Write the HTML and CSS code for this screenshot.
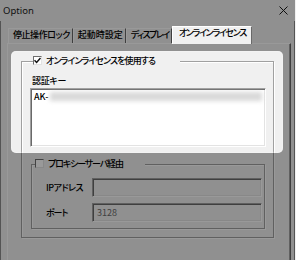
FILE: index.html
```html
<!DOCTYPE html>
<html lang="ja">
<head>
    <meta charset="UTF-8">
    <meta name="viewport" content="width=device-width, initial-scale=1.0">
    <title>Option</title>
    <link rel="stylesheet" href="styles.css">
</head>
<body>
    <div class="window">
        <div class="titlebar">
            <span class="title">Option</span>
            <svg class="close" width="9" height="9" viewBox="0 0 9 9">
                <path d="M0.5 0.5L8.5 8.5M8.5 0.5L0.5 8.5" stroke="#1a1a1a" stroke-width="1" fill="none"/>
            </svg>
        </div>
        <div class="client">
            <div class="tabs">
                <div class="tab tab-lock">停止操作ロック</div>
                <div class="tab">起動時設定</div>
                <div class="tab tab-display">ディスプレイ</div>
                <div class="tab tab-online active">オンラインライセンス</div>
            </div>
            <div class="panel">
                <div class="group license">
                    <div class="legend">
                        <span class="check">
                            <svg width="7" height="7" viewBox="0 0 7 7">
                                <path d="M0.5 3.2L2.6 5.4L6.5 1" stroke="#111" stroke-width="1.5" fill="none"/>
                            </svg>
                        </span>
                        <span class="legend-text online-text">オンラインライセンスを使用する</span>
                    </div>
                    <div class="field-label">認証キー</div>
                    <div class="keybox">
                        <div class="key-line">AK-<span class="redacted"></span></div>
                    </div>
                    <div class="group proxy">
                        <div class="legend">
                            <span class="check"></span>
                            <span class="legend-text proxy-text">プロキシーサーバ経由</span>
                        </div>
                        <div class="row">
                            <span class="row-label ip-label">IPアドレス</span>
                            <div class="input"></div>
                        </div>
                        <div class="row">
                            <span class="row-label port-label">ポート</span>
                            <div class="input disabled-text">3128</div>
                        </div>
                    </div>
                </div>
            </div>
        </div>
        <div class="spotlight"></div>
    </div>
</body>
</html>
```

FILE: styles.css
```css
* {
    box-sizing: border-box;
}

body {
    margin: 0;
    background-color: #f0f0f0;
    font-family: "Noto Sans CJK JP", sans-serif;
    font-size: 9px;
    font-weight: 500;
    line-height: 11px;
    color: #000000;
    font-feature-settings: "palt";
}

.window {
    position: relative;
    width: 295px;
    height: 260px;
    overflow: hidden;
}

.titlebar {
    height: 21px;
    display: flex;
    justify-content: space-between;
    align-items: center;
    padding: 0 7px 0 3px;
}

.title {
    font-family: "Noto Sans", sans-serif;
    font-size: 9.5px;
    font-weight: 400;
    color: #1a1a1a;
}

.client {
    height: 239px;
    border-left: 1px solid #8c8c8c;
    border-right: 1px solid #8c8c8c;
    padding: 5px 3px 0 6px;
}

.tabs {
    display: flex;
    align-items: flex-end;
    height: 17px;
    padding-left: 1px;
}

.tab {
    height: 15px;
    line-height: 10px;
    padding: 1px 2px 0 4px;
    border-top: 1px solid #ffffff;
    border-left: 1px solid #ffffff;
    border-right: 1px solid #696969;
    white-space: nowrap;
}

.tab-lock {
    letter-spacing: -0.45px;
}

.tab-display {
    letter-spacing: -1.5px;
}

.tab-online {
    letter-spacing: -1.3px;
}

.tab.active {
    position: relative;
    z-index: 1;
    height: 18px;
    margin-bottom: -1px;
    padding: 1px 5px 0 6px;
    background-color: #f0f0f0;
}

.panel {
    height: 240px;
    border-top: 1px solid #ffffff;
    border-left: 1px solid #ffffff;
    border-right: 1px solid #696969;
    box-shadow: inset -1px 0 0 #a0a0a0;
    padding: 17px 0 0 13px;
}

.group {
    border: 1px solid #a0a0a0;
    box-shadow: inset 1px 1px 0 #ffffff, 1px 1px 0 #ffffff;
}

.license {
    width: 253px;
    height: 177px;
}

.proxy {
    width: 234px;
    height: 65px;
    margin: 17px 0 0 9px;
}

.legend {
    display: flex;
    align-items: center;
    gap: 4px;
    width: fit-content;
    height: 11px;
    background-color: #f0f0f0;
    white-space: nowrap;
}

.license > .legend {
    margin: -7px 0 0 11px;
    padding-right: 25px;
}

.proxy > .legend {
    margin: -7px 0 0 3px;
    padding-right: 22px;
}

.online-text {
    letter-spacing: -0.9px;
}

.proxy-text {
    letter-spacing: -1.15px;
}

.check {
    display: flex;
    justify-content: center;
    align-items: center;
    width: 9px;
    height: 9px;
    background-color: #ffffff;
    border-top: 1px solid #6e6e6e;
    border-left: 1px solid #6e6e6e;
    border-right: 1px solid #e3e3e3;
    border-bottom: 1px solid #e3e3e3;
}

.field-label {
    margin: 9px 0 0 10px;
    letter-spacing: -0.3px;
}

.keybox {
    width: 236px;
    height: 59px;
    margin: 2px 0 0 8px;
    padding: 2px 3px;
    background-color: #ffffff;
    border-top: 1px solid #a0a0a0;
    border-left: 1px solid #a0a0a0;
    border-right: 1px solid #ffffff;
    border-bottom: 1px solid #ffffff;
    box-shadow: inset 1px 1px 0 #696969, inset -1px -1px 0 #e3e3e3;
}

.key-line {
    display: flex;
    align-items: center;
    height: 11px;
}

.redacted {
    display: inline-block;
    width: 212px;
    height: 9px;
    margin-left: 2px;
    background-color: #d9d9d9;
    filter: blur(2px);
}

.row {
    display: flex;
    align-items: center;
    height: 19px;
    margin-top: 6px;
    padding-left: 14px;
}

.legend + .row {
    margin-top: 9px;
}

.row-label {
    width: 46px;
}

.ip-label {
    letter-spacing: -0.5px;
}

.port-label {
    letter-spacing: -1px;
}

.input {
    width: 170px;
    height: 19px;
    padding: 3px 4px;
    font-weight: 400;
    border-top: 1px solid #a0a0a0;
    border-left: 1px solid #a0a0a0;
    border-right: 1px solid #ffffff;
    border-bottom: 1px solid #ffffff;
    box-shadow: inset 1px 1px 0 #696969, inset -1px -1px 0 #e3e3e3;
}

.disabled-text {
    color: #6d6d6d;
}

.spotlight {
    position: absolute;
    left: 11px;
    top: 51px;
    width: 272px;
    height: 102px;
    border-radius: 5px;
    box-shadow: 0 0 0 400px rgba(0, 0, 0, 0.4), inset 0 0 2px rgba(255, 255, 255, 0.9);
    pointer-events: none;
}
```
